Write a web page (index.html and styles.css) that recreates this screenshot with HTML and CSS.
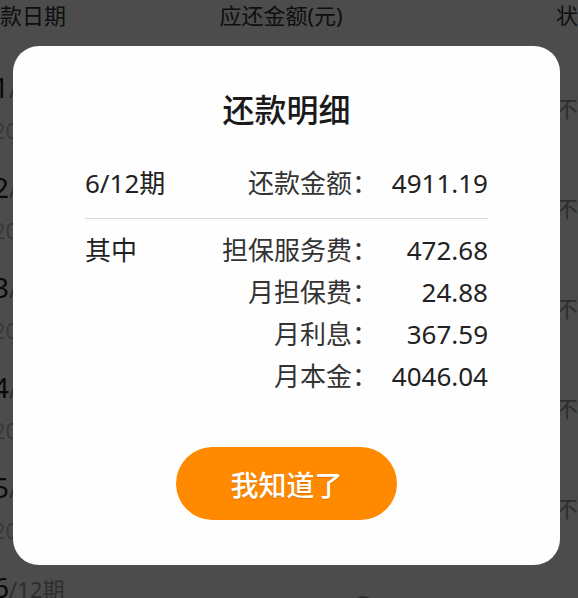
FILE: index.html
```html
<!DOCTYPE html>
<html lang="zh-CN">
<head>
    <meta charset="UTF-8">
    <meta name="viewport" content="width=device-width, initial-scale=1.0">
    <title>还款计划</title>
    <link rel="stylesheet" href="styles.css">
</head>
<body>
    <!-- Repayment plan table (behind the popup) -->
    <div class="plan-table">
        <div class="plan-head">
            <div class="col-date">还款日期</div>
            <div class="col-amount">应还金额(元)</div>
            <div class="col-status">状态</div>
        </div>

        <div class="plan-row">
            <div class="col-date">
                <div class="period"><b>1</b>/12期</div>
                <div class="due-date">2022-01-15</div>
            </div>
            <div class="col-amount">4911.19 <span class="info-icon"></span></div>
            <div class="col-status">不可</div>
        </div>
        <div class="plan-row">
            <div class="col-date">
                <div class="period"><b>2</b>/12期</div>
                <div class="due-date">2022-02-15</div>
            </div>
            <div class="col-amount">4911.19 <span class="info-icon"></span></div>
            <div class="col-status">不可</div>
        </div>
        <div class="plan-row">
            <div class="col-date">
                <div class="period"><b>3</b>/12期</div>
                <div class="due-date">2022-03-15</div>
            </div>
            <div class="col-amount">4911.19 <span class="info-icon"></span></div>
            <div class="col-status">不可</div>
        </div>
        <div class="plan-row">
            <div class="col-date">
                <div class="period"><b>4</b>/12期</div>
                <div class="due-date">2022-04-15</div>
            </div>
            <div class="col-amount">4911.19 <span class="info-icon"></span></div>
            <div class="col-status">不可</div>
        </div>
        <div class="plan-row">
            <div class="col-date">
                <div class="period"><b>5</b>/12期</div>
                <div class="due-date">2022-05-15</div>
            </div>
            <div class="col-amount">4911.19 <span class="info-icon"></span></div>
            <div class="col-status">不可</div>
        </div>
        <div class="plan-row">
            <div class="col-date">
                <div class="period"><b>6</b>/12期</div>
                <div class="due-date">2022-06-15</div>
            </div>
            <div class="col-amount">4911.19 <span class="info-icon"></span></div>
            <div class="col-status">已还款</div>
        </div>
    </div>

    <!-- Popup with the details of one installment -->
    <div class="mask">
        <div class="detail-box">
            <h3 class="detail-title">还款明细</h3>

            <div class="detail-line">
                <span class="detail-left">6/12期</span>
                <span class="detail-label">还款金额：</span>
                <span class="detail-value">4911.19</span>
            </div>

            <div class="detail-divider"></div>

            <div class="detail-line">
                <span class="detail-left">其中</span>
                <span class="detail-label">担保服务费：</span>
                <span class="detail-value">472.68</span>
            </div>
            <div class="detail-line">
                <span class="detail-label">月担保费：</span>
                <span class="detail-value">24.88</span>
            </div>
            <div class="detail-line">
                <span class="detail-label">月利息：</span>
                <span class="detail-value">367.59</span>
            </div>
            <div class="detail-line">
                <span class="detail-label">月本金：</span>
                <span class="detail-value">4046.04</span>
            </div>

            <button class="ok-button" id="okButton">我知道了</button>
        </div>
    </div>
</body>
</html>
```

FILE: styles.css
```css
body {
    font-family: "Noto Sans", "Noto Sans CJK SC", sans-serif;
    background-color: #fff;
    margin: 0;
    padding: 0;
    width: 578px;
    height: 598px;
    overflow: hidden;
}

/* table behind the popup */
.plan-table {
    width: 622px;
    margin-left: -22px;
}
.plan-head,
.plan-row {
    display: grid;
    grid-template-columns: 200px 206px 1fr;
}
.plan-head {
    height: 57px;
    font-size: 22px;
    line-height: 30px;
    color: #333;
}
.plan-head .col-amount {
    text-align: center;
}
.col-status {
    text-align: right;
}
.plan-row {
    height: 100px;
    align-items: center;
}
.plan-row .col-date {
    padding-left: 15px;
    align-self: start;
    padding-top: 13px;
}
.period {
    font-size: 22px;
    line-height: 34px;
    color: #999;
}
.period b {
    font-size: 28px;
    font-weight: normal;
    color: #222;
}
.due-date {
    font-size: 22px;
    line-height: 48px;
    color: #bbb;
}
.plan-row .col-amount {
    padding-left: 77px;
    font-size: 24px;
    color: #333;
    display: flex;
    align-items: center;
    gap: 8px;
}
.info-icon {
    width: 18px;
    height: 18px;
    border: 2px solid #999;
    border-radius: 50%;
}
.plan-row .col-status {
    font-size: 22px;
    color: #999;
}

/* popup */
.mask {
    position: fixed;
    top: 0;
    left: 0;
    right: 0;
    bottom: 0;
    background-color: rgba(0, 0, 0, 0.7);
    padding: 46px 0 0 13px;
}
.detail-box {
    width: 547px;
    box-sizing: border-box;
    padding: 43px 72px 45px;
    background-color: #fefefe;
    border-radius: 26px;
    color: #222;
}
.detail-title {
    margin: 0 0 31px;
    font-size: 32px;
    font-weight: 500;
    line-height: 42px;
    text-align: center;
    color: #1a1a1a;
}
.detail-line {
    display: flex;
    font-size: 26px;
    line-height: 42px;
}
.detail-left {
    color: #222;
}
.detail-label {
    flex: 1;
    text-align: right;
    color: #333;
}
.detail-value {
    width: 110px;
    text-align: right;
}
.detail-divider {
    height: 1px;
    background-color: #d9d9d9;
    margin: 14px 0 10px;
}
.ok-button {
    display: block;
    width: 221px;
    height: 73px;
    margin: 50px auto 0;
    border: none;
    border-radius: 37px;
    background-color: #ff8a00;
    color: #fff;
    font-family: inherit;
    font-size: 28px;
    font-weight: 500;
    text-shadow: 0 1px 1px rgba(150, 70, 0, 0.35);
    cursor: pointer;
}
```
